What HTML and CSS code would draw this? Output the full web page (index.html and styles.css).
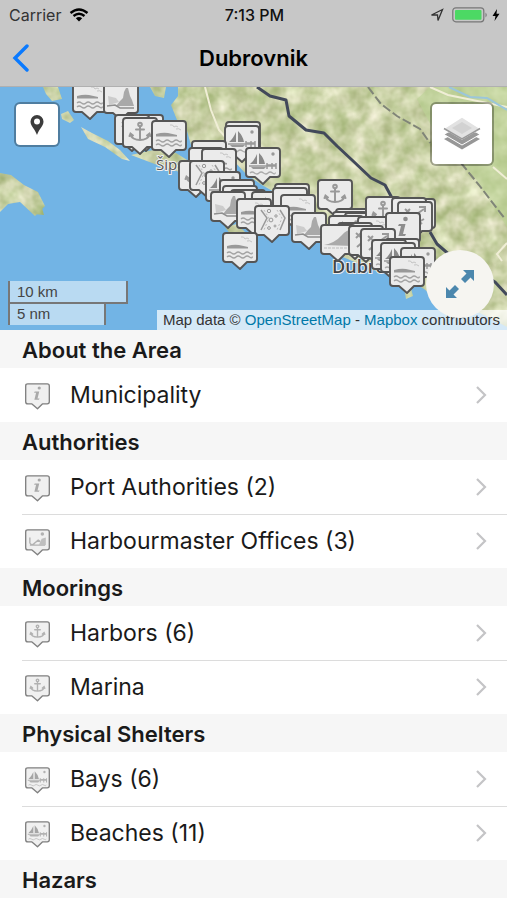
FILE: index.html
```html
<!DOCTYPE html>
<html lang="en">
<head>
<meta charset="UTF-8">
<meta name="viewport" content="width=device-width, initial-scale=1">
<title>Dubrovnik</title>
<link rel="stylesheet" href="styles.css">
</head>
<body>

<!-- shared icons, pins are drawn in a 36x40 box -->
<svg class="sprite" aria-hidden="true">
  <defs>
  <path id="blank" d="M4 1H32Q35 1 35 4V27Q35 30 32 30H25L18 37L10 30H4Q1 30 1 27V4Q1 1 4 1Z" fill="#ebebeb" stroke="#555" stroke-width="1.900" stroke-linejoin="round"/>
  <g id="anchor">
    <use href="#blank"/>
    <g fill="none" stroke="#999" stroke-width="2" stroke-linecap="round">
      <circle cx="18" cy="7.500" r="1.800"/><path d="M18 9.500V23M14 12.500H22M8.500 17C9 25 27 25 27.500 17M7.500 19L8.500 16.500L11 18.500M25 18.500L27.500 16.500L28.500 19"/>
    </g>
  </g>
  <g id="wave">
    <use href="#blank"/>
    <path d="M5 14Q12 12 17 13L26 15V16.500H5Z" fill="#999"/>
    <path d="M19 5Q22 4 23 7Q25 5 27 7M25 9Q28 8 30 10" fill="none" stroke="#c4c4c4"/>
    <path d="M5 21q2-2 4.500 0t4.500 0t4.500 0t4.500 0t4.500 0t3-.5M5 25q2-2 4.500 0t4.500 0t4.500 0t4.500 0t4.500 0t3-.5" fill="none" stroke="#a2a2a2" stroke-width="1.300"/>
  </g>
  <g id="rock">
    <use href="#blank"/>
    <path d="M13 23L17 18L20 15L21 9L23 5L25 5L27 13L29 17L31 23Z" fill="#a9a9a9"/>
    <path d="M5 13L13 15L16 19L6 22Z" fill="#ccc"/>
    <path d="M4 23L12 22L17 25H31" fill="none" stroke="#8f8f8f" stroke-width="1.500"/>
  </g>
  <g id="sail">
    <use href="#blank"/>
    <path d="M12 7V17H5Q9 14 12 7ZM14 6Q19 11 20 17H14Z" fill="#888"/>
    <path d="M4 19H31M22 16V22M27 16V22M31 16V22M22 18H31" fill="none" stroke="#999" stroke-width="1.500"/>
    <path d="M6 20H21L19 22H8Z" fill="#999"/>
    <circle cx="28" cy="7" r="1.700" fill="#999"/>
    <path d="M5 26q2-2 4.500 0t4.500 0t4.500 0t4.500 0t4.500 0t3-.5" fill="none" stroke="#aaa" stroke-width="1.200"/>
  </g>
  <g id="channel">
    <use href="#blank"/>
    <path d="M7 5L13 13L7 25M26 5L31 13L26 25" fill="none" stroke="#999" stroke-width="1.500"/>
    <path d="M10 5L15 13L10 25M23 5L28 13L23 25" fill="none" stroke="#bbb" stroke-dasharray="2 2"/>
    <g fill="none" stroke="#999"><circle cx="15" cy="6" r="1.700"/><circle cx="17" cy="15" r="1.900"/><circle cx="22" cy="11" r="1.200"/><circle cx="15" cy="23" r="1.400"/><circle cx="21" cy="21" r="1"/></g>
  </g>
  <g id="hill">
    <use href="#blank"/>
    <path d="M4 21Q15 19 22 11Q26 6 33 5V22Z" fill="#aaa"/>
    <path d="M4 24H32" stroke="#bbb" stroke-dasharray="3 1"/>
  </g>
  <g id="info">
    <use href="#blank"/>
    <circle cx="20.500" cy="7" r="2.300" fill="#8d8d8d"/>
    <path d="M14 12H20.500L18 22H21L20 24H13.500L16 14H13Z" fill="#8d8d8d"/>
  </g>
  <g id="club">
    <use href="#blank"/>
    <path d="M8 8L25 23M27 8L17 15L9 22M8 13L13 8M22 6H28V11M20 22L27 18" fill="none" stroke="#999" stroke-width="2"/>
  </g>
  <g id="office">
    <use href="#blank"/>
    <path d="M7 12V20Q10 25 14 20L19 16L22 18M7 23H29" fill="none" stroke="#999" stroke-width="2"/>
    <path d="M20 23L24 14L30 12V23Z" fill="#aaa"/><circle cx="25" cy="7" r="2.500" fill="#999"/>
  </g>
  <path id="chevron" d="M2 2L10 10L2 18" fill="none" stroke="#c4c4c6" stroke-width="2.200"/>
  </defs>
</svg>

<header class="topbar">
  <div class="status">
    <div class="status-left">
      <span>Carrier</span>
      <svg width="20" height="14" viewBox="0 0 20 14">
        <path d="M1.500 5Q10-2 18.500 5M4.500 8Q10 3.500 15.500 8" fill="none" stroke="#000" stroke-width="2.400"/>
        <path d="M6.800 10.200Q10 7.800 13.200 10.200L10 13.500Z"/>
      </svg>
    </div>
    <span class="clock">7:13 PM</span>
    <div class="status-right">
      <svg width="14" height="14" viewBox="0 0 14 14"><path d="M12.500 1.500L1.500 7H7.500L8 12.500Z" fill="none" stroke="#333" stroke-width="1.300"/></svg>
      <svg width="36" height="16" viewBox="0 0 36 16">
        <rect x=".8" y=".8" width="31" height="14" rx="3" fill="none" stroke="#777" stroke-width="1.200"/>
        <rect x="3" y="3" width="26.500" height="9.800" rx="1" fill="#4cd964"/>
        <path d="M33.500 5.500Q36 8 33.500 10.500Z" fill="#777"/>
      </svg>
      <svg width="8" height="12" viewBox="0 0 8 12"><path d="M5 0L.5 7H3.500L2.500 12L7.500 4.700H4.500Z"/></svg>
    </div>
  </div>
  <nav class="navbar">
    <button class="back" aria-label="Back">
      <svg width="17" height="28" viewBox="0 0 17 28"><path d="M15 2L3 14L15 26" fill="none" stroke="#0a7aff" stroke-width="3.400" stroke-linecap="round"/></svg>
    </button>
    <h1>Dubrovnik</h1>
  </nav>
</header>

<section class="map">
  <svg class="map-canvas" viewBox="0 0 507 243" preserveAspectRatio="xMidYMid slice" aria-hidden="true">
    <defs>
      <filter id="relief" x="0" y="0" width="100%" height="100%" color-interpolation-filters="sRGB">
        <feTurbulence type="fractalNoise" baseFrequency=".06" numOctaves="3" seed="8"/>
        <feColorMatrix values=".42 .06 0 0 .55  .34 0 0 0 .65  .5 .08 0 0 .36  0 0 0 0 1"/>
        <feComposite in2="SourceGraphic" operator="in"/>
      </filter>
    </defs>
    <rect width="507" height="243" fill="#72b4e5"/>

    <!-- land -->
    <g fill="#cdd3a8" filter="url(#relief)">
      <path d="M178 0L178 9L171 18L177 33L187 44L191 58L210 68L232 72L246 87L262 98L276 106L300 124L318 150L338 168L350 173L372 183L400 187L424 202L436 212L456 222L480 226L507 240V0Z"/>
      <path d="M43 0H58L62 12L52 14L46 7Z"/>
      <path d="M61 27L68 24L74 33L70 36L62 32Z"/>
      <path d="M81 40L92 46L108 54L120 63L130 74L122 72L105 60L88 52Z"/>
      <path d="M131 68L148 64L160 62L176 66L192 76L210 90L205 101L191 95L177 84L160 79Z"/>
      <path d="M0 86L11 88L24 98L38 105L45 119L35 129L20 115L8 117L0 125Z"/>
      <path d="M150 0H166L164 11L155 9Z"/>
      <path d="M225 140L237 137L246 146L231 148Z"/>
      <path d="M402 187L408 190L413 209L406 212Z"/>
      <path d="M30 118L42 121L44 128L33 127Z"/>
    </g>
    <path d="M430 0H507V140L476 92L440 55L417 12Z" fill="#bdd396" opacity=".6"/>
    <path d="M205 0L211 23L219 43L229 54M430 0L448 8L507 20M493 80L507 92M507 156L497 167L502 174" fill="none" stroke="#f0eed6" stroke-width="2"/>
    <path d="M449 0L470 10L487 11L507 23" fill="none" stroke="#9bc6da" stroke-width="2"/>
    <path d="M257 0L270 9L286 13L289 29L306 43L324 46L337 59L352 73L371 91L385 98L392 111L393 128M430 145L437 157L452 170L470 180L495 195L507 208" fill="none" stroke="#42495a" stroke-width="3" stroke-linejoin="round"/>
    <path d="M368 0L381 17L397 29L420 42L430 56M461 76L479 98L505 132" fill="none" stroke="#808578" stroke-width="2" stroke-dasharray="9 3"/>

    <g class="place">
      <text x="156" y="83">Šipan</text>
      <text x="332" y="186" class="town">Dubrovnik</text>
    </g>

    <!-- points of interest -->
    <g>
      <use href="#wave" x="72" y="-5"/><use href="#rock" x="103" y="-4"/>
      <use href="#blank" x="128" y="27"/><use href="#club" x="114" y="27"/><use href="#anchor" x="122" y="30"/><use href="#wave" x="151" y="33"/>
      <use href="#blank" x="225" y="34"/><use href="#sail" x="224" y="38"/><use href="#blank" x="191" y="53"/><use href="#blank" x="188" y="60"/>
      <use href="#wave" x="201" y="61"/><use href="#sail" x="245" y="60"/><use href="#anchor" x="178" y="73"/><use href="#channel" x="189" y="73"/>
      <use href="#sail" x="205" y="84"/><use href="#blank" x="219" y="92"/><use href="#blank" x="222" y="98"/><use href="#blank" x="230" y="102"/>
      <use href="#sail" x="251" y="104"/><use href="#rock" x="210" y="104"/><use href="#wave" x="236" y="111"/>
      <use href="#blank" x="274" y="96"/><use href="#blank" x="272" y="100"/><use href="#wave" x="280" y="107"/><use href="#channel" x="254" y="118"/>
      <use href="#wave" x="222" y="145"/><use href="#rock" x="291" y="125"/><use href="#anchor" x="317" y="92"/>
      <use href="#blank" x="335" y="121"/><use href="#blank" x="332" y="124"/><use href="#blank" x="344" y="125"/><use href="#sail" x="328" y="128"/>
      <use href="#anchor" x="365" y="109"/><use href="#blank" x="400" y="111"/><use href="#blank" x="391" y="110"/><use href="#club" x="397" y="114"/>
      <use href="#wave" x="357" y="129"/><use href="#info" x="385" y="125"/><use href="#blank" x="337" y="135"/><use href="#hill" x="320" y="137"/>
      <use href="#club" x="348" y="138"/><use href="#club" x="360" y="141"/><use href="#blank" x="384" y="151"/><use href="#sail" x="371" y="152"/>
      <use href="#sail" x="380" y="155"/><use href="#sail" x="400" y="160"/><use href="#wave" x="389" y="169"/>
    </g>
  </svg>

  <button class="map-btn locate" aria-label="Show my position">
    <svg width="14" height="20" viewBox="0 0 14 20"><path fill-rule="evenodd" d="M7 0A6.500 6.500 0 0 0 .5 6.500C.5 11 5 14 7 20C9 14 13.500 11 13.500 6.500A6.500 6.500 0 0 0 7 0ZM7 3.500A3 3 0 1 1 7 9.500A3 3 0 1 1 7 3.500Z" fill="#3c3c3c"/></svg>
  </button>
  <button class="map-btn layers" aria-label="Layers">
    <svg width="38" height="36" viewBox="0 0 38 36">
      <path d="M1 23L19 33.500L37 23L33 21H5Z" fill="#979797"/>
      <path d="M1 18.500L19 29L37 18.500L33 16H5Z" fill="#999" stroke="#fff"/>
      <path d="M1 12.500L19 23L37 12.500L19 1Z" fill="#e2e2e2" stroke="#fff" stroke-width="1.200"/>
      <path d="M1 12.500L19 23L37 12.500" fill="none" stroke="#999" stroke-width="1.500"/>
      <path d="M9 12L19 18L29 12L19 6Z" fill="#d2d2d2"/>
    </svg>
  </button>

  <div class="scale">
    <div class="scale-km">10 km</div>
    <div class="scale-nm">5 nm</div>
  </div>
  <p class="attribution">Map data © <a href="#osm">OpenStreetMap</a> - <a href="#mapbox">Mapbox</a> contributors</p>
  <button class="expand" aria-label="Full screen">
    <svg width="30" height="30" viewBox="0 0 30 30"><path d="M18 1H29V12L25.500 8.500L20 14L16 10L21.500 4.500ZM1 18L4.500 21.500L10 16L14 20L8.500 25.500L12 29H1Z" fill="#4b87ad"/></svg>
  </button>
</section>

<main>
  <h2>About the Area</h2>
  <ul>
    <li><a href="#municipality"><svg class="pin" viewBox="0 0 36 40"><use href="#info"/></svg><span>Municipality</span><svg class="chevron"><use href="#chevron"/></svg></a></li>
  </ul>

  <h2>Authorities</h2>
  <ul>
    <li><a href="#port"><svg class="pin" viewBox="0 0 36 40"><use href="#info"/></svg><span>Port Authorities (2)</span><svg class="chevron"><use href="#chevron"/></svg></a></li>
    <li><a href="#offices"><svg class="pin" viewBox="0 0 36 40"><use href="#office"/></svg><span>Harbourmaster Offices (3)</span><svg class="chevron"><use href="#chevron"/></svg></a></li>
  </ul>

  <h2>Moorings</h2>
  <ul>
    <li><a href="#harbors"><svg class="pin" viewBox="0 0 36 40"><use href="#anchor"/></svg><span>Harbors (6)</span><svg class="chevron"><use href="#chevron"/></svg></a></li>
    <li><a href="#marina"><svg class="pin" viewBox="0 0 36 40"><use href="#anchor"/></svg><span>Marina</span><svg class="chevron"><use href="#chevron"/></svg></a></li>
  </ul>

  <h2>Physical Shelters</h2>
  <ul>
    <li><a href="#bays"><svg class="pin" viewBox="0 0 36 40"><use href="#sail"/></svg><span>Bays (6)</span><svg class="chevron"><use href="#chevron"/></svg></a></li>
    <li><a href="#beaches"><svg class="pin" viewBox="0 0 36 40"><use href="#sail"/></svg><span>Beaches (11)</span><svg class="chevron"><use href="#chevron"/></svg></a></li>
  </ul>

  <h2>Hazars</h2>
</main>

</body>
</html>
```
FILE: styles.css
```css
* { box-sizing: border-box; }
body { margin: 0; background: #fff; color: #1a1a1a; font-family: Inter, "Liberation Sans", sans-serif; }
h1, h2, p, ul { margin: 0; padding: 0; }
ul { list-style: none; }
a { text-decoration: none; }
button { border: 0; padding: 0; cursor: pointer; }
svg { display: block; flex: none; }
.sprite { position: absolute; width: 0; height: 0; }

/* top bar */
.topbar { background: #c7c7c7; border-bottom: 1px solid #b0b0b0; }
.status {
  display: grid;
  grid-template-columns: 1fr auto 1fr;
  align-items: center;
  height: 30px;
  padding: 0 7px 0 9px;
  font-size: 16px;
}
.status-left, .status-right { display: flex; align-items: center; gap: 8px; }
.status-left { color: #333; }
.status-right { justify-content: flex-end; }
.status-right svg:last-child { margin-left: -4px; }
.clock { color: #111; font-weight: 500; }
.navbar {
  display: grid;
  grid-template-columns: 1fr auto 1fr;
  align-items: center;
  height: 56px;
  padding: 0 12px;
}
.back { justify-self: start; background: none; }
h1 { font-size: 22px; line-height: 28px; font-weight: 600; color: #000; }

/* map */
.map { position: relative; height: 243px; overflow: hidden; }
.map-canvas { width: 100%; height: 100%; }
.place { font-family: "Open Sans", sans-serif; font-size: 15px; fill: #555; stroke: #eee; stroke-width: 2px; paint-order: stroke; }
.town { font-size: 18px; font-weight: 600; fill: #444; }
.map-btn {
  position: absolute;
  top: 15px;
  display: grid;
  place-items: center;
  background: #fff;
  border: 2px solid rgba(0, 0, 0, .3);
  background-clip: padding-box;
  border-radius: 6px;
}
.locate { left: 14px; width: 46px; height: 45px; }
.layers { right: 13px; width: 64px; height: 64px; }
.expand {
  position: absolute;
  right: 13px;
  bottom: 12px;
  display: grid;
  place-items: center;
  width: 68px;
  height: 68px;
  border-radius: 50%;
  background: #f6f5f1;
}
.scale {
  position: absolute;
  left: 8px;
  bottom: 5px;
  font: 15px/20px "Liberation Sans", sans-serif;
  color: #444;
}
.scale div { background: rgba(255, 255, 255, .5); border: 2px solid #777; border-top: 0; padding-left: 7px; }
.scale-km { width: 120px; height: 23px; padding-top: 1px; }
.scale .scale-nm { width: 98px; height: 21px; border-bottom: 0; }
.attribution {
  position: absolute;
  right: 0;
  bottom: 0;
  padding: 0 7px 0 6px;
  background: rgba(255, 255, 255, .7);
  font: 15px/20px "Liberation Sans", sans-serif;
  color: #333;
}
.attribution a { color: #0078a8; }

/* list */
h2 { height: 38px; padding-left: 22px; background: #f6f6f6; font-size: 22px; line-height: 40px; font-weight: 600; }
li a { display: flex; align-items: center; height: 54px; padding: 0 20px 0 25px; color: #1a1a1a; font-size: 23px; }
li + li { position: relative; }
li + li::before { content: ""; position: absolute; top: 0; left: 22px; right: 0; border-top: 1px solid #dcdcdc; }
li span { flex: 1; }
.pin { width: 25px; height: 28px; margin: 3px 20px 0 0; opacity: .75; }
.chevron { width: 12px; height: 20px; }
```
